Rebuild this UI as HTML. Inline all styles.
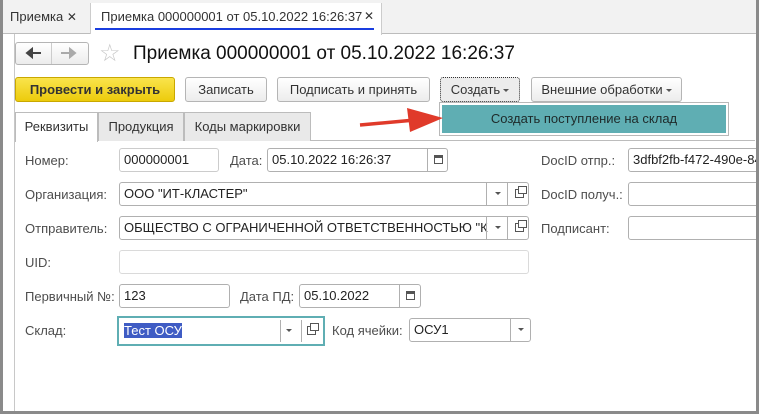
<!DOCTYPE html>
<html><head><meta charset="utf-8"><style>
*{box-sizing:border-box;margin:0;padding:0}
body{width:759px;height:414px;overflow:hidden;background:#fff;font-family:"Liberation Sans",Arial,sans-serif;font-size:13px;color:#333;position:relative}
.a{position:absolute}
.tabbar{left:0;top:0;width:759px;height:34px;background:#f2f2f2;border-bottom:1px solid #bcbcbc}
.frame{left:0;top:0;width:759px;height:414px;border:3px solid #8a8a8a;border-top:none}
.btn{position:absolute;height:25px;border:1px solid #b5b5b5;border-radius:3px;background:linear-gradient(#fff,#ececec);text-align:center;line-height:23px;font-size:13px;color:#333}
.lbl{position:absolute;color:#4d4d4d;font-size:13px}
.fld{position:absolute;border:1px solid #b0b0b0;border-radius:3px;background:#fff;height:24px;line-height:22px;padding-left:4px;font-size:13px;color:#222;white-space:nowrap;overflow:hidden}
.sep{position:absolute;top:0;width:1px;height:100%;background:#b0b0b0}
.dd{position:absolute;top:9px;width:0;height:0;border-left:3px solid transparent;border-right:3px solid transparent;border-top:3px solid #555}
.op{position:absolute;top:6px;width:9px;height:9px;border:1px solid #555}
.op:after{content:"";position:absolute;left:2px;top:-4px;width:7px;height:6px;border:1px solid #555;background:#fff}
.cal{position:absolute;top:6px;width:9px;height:9px;border:1px solid #555;border-top:3px solid #555}
.tab{position:absolute;top:112px;height:29px;border:1px solid #bcbcbc;border-bottom:none;background:#e9e9e9;line-height:28px;text-align:center;font-size:13px;color:#333}
.ar{display:inline-block;width:0;height:0;border-left:3px solid transparent;border-right:3px solid transparent;border-top:3px solid #555;vertical-align:middle;margin-left:3px}
</style></head><body>
<div class="a tabbar"></div>
<div class="a" style="left:10px;top:9px;font-size:13px;color:#333">Приемка <span style="font-size:12px">✕</span></div>
<div class="a" style="left:90px;top:3px;width:1px;height:31px;background:#ccc"></div>
<div class="a" style="left:91px;top:3px;width:291px;height:32px;background:#fff;border-right:1px solid #ccc"></div>
<div class="a" style="left:101px;top:9px;font-size:13px;color:#333">Приемка 000000001 от 05.10.2022 16:26:37</div>
<div class="a" style="left:364px;top:9px;font-size:12px;color:#333">✕</div>
<div class="a" style="left:95px;top:28px;width:279px;height:2px;background:#1a3ee0"></div>
<div class="a" style="left:14px;top:34px;width:1px;height:378px;background:#c8c8c8"></div>

<div class="btn" style="left:15px;top:42px;width:74px;height:23px"></div>
<div class="a" style="left:51px;top:43px;width:1px;height:21px;background:#ccc"></div>
<svg class="a" style="left:25px;top:46px" width="60" height="14"><path d="M2 7H16M2 7L7 3V11Z" stroke="#444" stroke-width="2" fill="#444"/><path d="M36 7H50M50 7L45 3V11Z" stroke="#aaa" stroke-width="2" fill="#aaa"/></svg>
<div class="a" style="left:99px;top:39px;font-size:24px;color:#c8c8c8">☆</div>
<div class="a" style="left:133px;top:43px;font-size:19px;color:#111">Приемка 000000001 от 05.10.2022 16:26:37</div>

<div class="btn" style="left:15px;top:77px;width:160px;background:linear-gradient(#fae44c,#eccb0c);border-color:#c9a800;font-weight:bold;color:#333">Провести и закрыть</div>
<div class="btn" style="left:185px;top:77px;width:82px">Записать</div>
<div class="btn" style="left:277px;top:77px;width:153px">Подписать и принять</div>
<div class="btn" style="left:440px;top:77px;width:80px;border:1px dotted #333;background:#ececec">Создать<span class="ar"></span></div>
<div class="btn" style="left:531px;top:77px;width:151px">Внешние обработки<span class="ar"></span></div>

<div class="a" style="left:440px;top:103px;width:288px;height:32px;background:#5faeb3;border:2px solid #fff;outline:1px solid #b8b8b8;text-align:center;line-height:28px;color:#1e2a2a;font-size:13px">Создать поступление на склад</div>
<svg class="a" style="left:355px;top:104px" width="90" height="28"><line x1="5" y1="21" x2="60" y2="16" stroke="#e03a2a" stroke-width="3.5"/><polygon points="52,4 88,14 55,28" fill="#e03a2a"/></svg>

<div class="a" style="left:15px;top:140px;width:740px;height:1px;background:#bcbcbc"></div>
<div class="tab" style="left:15px;width:83px;background:#fff;height:30px">Реквизиты</div>
<div class="tab" style="left:98px;width:86px">Продукция</div>
<div class="tab" style="left:184px;width:127px">Коды маркировки</div>

<div class="lbl" style="left:25px;top:153px">Номер:</div>
<div class="fld" style="left:119px;top:148px;width:100px;border-color:#ccc">000000001</div>
<div class="lbl" style="left:230px;top:153px">Дата:</div>
<div class="fld" style="left:267px;top:148px;width:181px">05.10.2022 16:26:37<div class="sep" style="left:159px"></div><div class="cal" style="left:166px"></div></div>
<div class="lbl" style="left:541px;top:153px">DocID отпр.:</div>
<div class="fld" style="left:628px;top:148px;width:140px">3dfbf2fb-f472-490e-84</div>

<div class="lbl" style="left:25px;top:187px">Организация:</div>
<div class="fld" style="left:119px;top:182px;width:410px">ООО "ИТ-КЛАСТЕР"<div class="sep" style="left:366px"></div><div class="dd" style="left:375px"></div><div class="sep" style="left:387px"></div><div class="op" style="left:395px"></div></div>
<div class="lbl" style="left:541px;top:187px">DocID получ.:</div>
<div class="fld" style="left:628px;top:182px;width:140px"></div>

<div class="lbl" style="left:25px;top:221px">Отправитель:</div>
<div class="fld" style="left:119px;top:216px;width:410px">ОБЩЕСТВО С ОГРАНИЧЕННОЙ ОТВЕТСТВЕННОСТЬЮ "К<div class="sep" style="left:366px"></div><div class="dd" style="left:375px"></div><div class="sep" style="left:387px"></div><div class="op" style="left:395px"></div></div>
<div class="lbl" style="left:541px;top:221px">Подписант:</div>
<div class="fld" style="left:628px;top:216px;width:140px"></div>

<div class="lbl" style="left:25px;top:255px">UID:</div>
<div class="fld" style="left:119px;top:250px;width:410px;border-color:#dadada"></div>

<div class="lbl" style="left:25px;top:289px">Первичный №:</div>
<div class="fld" style="left:119px;top:284px;width:111px">123</div>
<div class="lbl" style="left:240px;top:289px">Дата ПД:</div>
<div class="fld" style="left:299px;top:284px;width:122px">05.10.2022<div class="sep" style="left:99px"></div><div class="cal" style="left:106px"></div></div>

<div class="lbl" style="left:25px;top:323px">Склад:</div>
<div class="fld" style="left:117px;top:316px;width:208px;height:30px;border:2px solid #5faeb3;border-radius:0;line-height:26px;padding-left:5px"><span style="background:#3f5cc4;color:#fff">Тест ОСУ</span><div class="sep" style="left:161px;top:2px;height:22px"></div><div class="dd" style="left:167px;top:11px"></div><div class="sep" style="left:182px;top:2px;height:22px"></div><div class="op" style="left:188px;top:8px"></div></div>
<div class="lbl" style="left:332px;top:323px">Код ячейки:</div>
<div class="fld" style="left:409px;top:318px;width:122px">ОСУ1<div class="sep" style="left:100px"></div><div class="dd" style="left:108px"></div></div>

<div class="a frame"></div>
</body></html>
